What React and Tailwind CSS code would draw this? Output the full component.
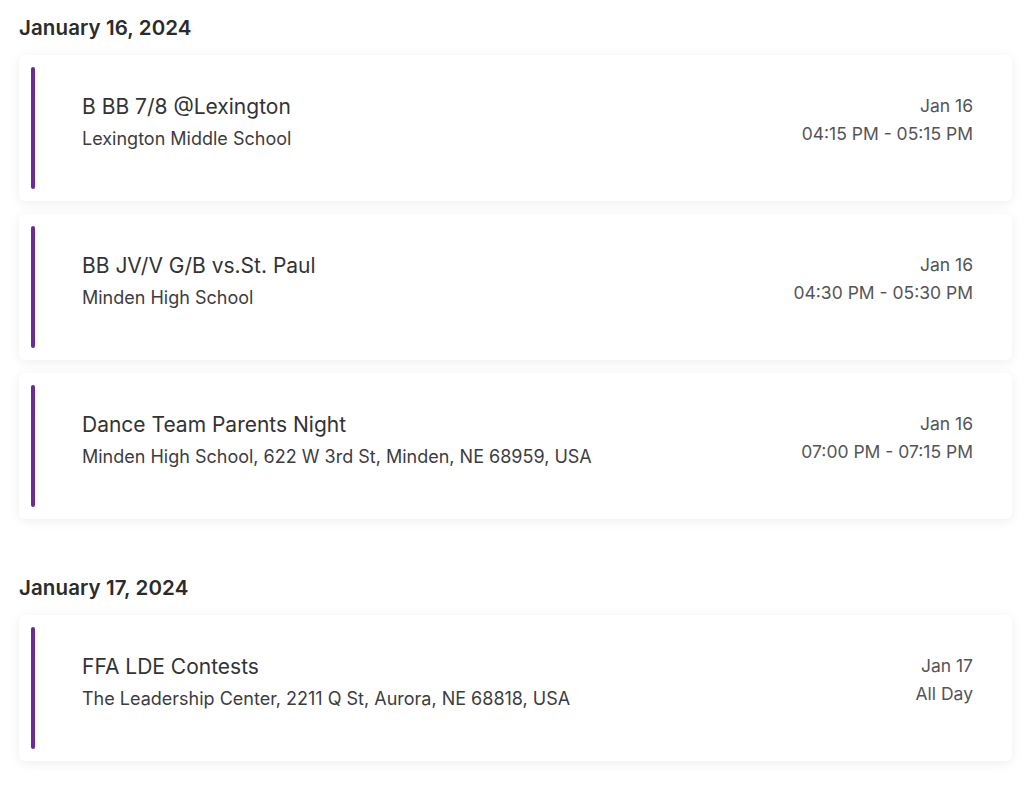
const days = [
  {
    label: "January 16, 2024",
    events: [
      { title: "B BB 7/8 @Lexington", place: "Lexington Middle School", date: "Jan 16", time: "04:15 PM - 05:15 PM" },
      { title: "BB JV/V G/B vs.St. Paul", place: "Minden High School", date: "Jan 16", time: "04:30 PM - 05:30 PM" },
      { title: "Dance Team Parents Night", place: "Minden High School, 622 W 3rd St, Minden, NE 68959, USA", date: "Jan 16", time: "07:00 PM - 07:15 PM" },
    ],
  },
  {
    label: "January 17, 2024",
    events: [
      { title: "FFA LDE Contests", place: "The Leadership Center, 2211 Q St, Aurora, NE 68818, USA", date: "Jan 17", time: "All Day" },
    ],
  },
];

const EventCard = ({ ev }) => (
  <div className="flex h-[146px] rounded-md bg-white p-3 shadow-[0_2px_12px_rgba(0,0,0,0.07)]">
    <div className="w-1 rounded-full bg-[#6a2c91]" />
    <div className="flex flex-1 justify-between pl-[47px] pr-[27px] pt-[25px]">
      <div>
        <p className="text-[21px] leading-[29px] text-[#333]">{ev.title}</p>
        <p className="mt-[5px] text-[18px] leading-[26px] text-[#3d3d3d]">{ev.place}</p>
      </div>
      <div className="text-right text-[17.5px] leading-[28px] text-[#555]">
        <p>{ev.date}</p>
        <p>{ev.time}</p>
      </div>
    </div>
  </div>
);

export default function App() {
  return (
    <div className="min-h-screen bg-white pl-[19px] pr-[12px] pt-[15px] font-['Inter',sans-serif]">
      {days.map((d, i) => (
        <section key={d.label} className={i > 0 ? "mt-[56px]" : ""}>
          <h2 className="text-[20.5px] font-semibold leading-[26px] tracking-[0.1px] text-[#2b2b2b]">{d.label}</h2>
          <div className="mt-[14px] flex flex-col gap-[13px]">
            {d.events.map((ev) => (
              <EventCard key={ev.title} ev={ev} />
            ))}
          </div>
        </section>
      ))}
    </div>
  );
}
